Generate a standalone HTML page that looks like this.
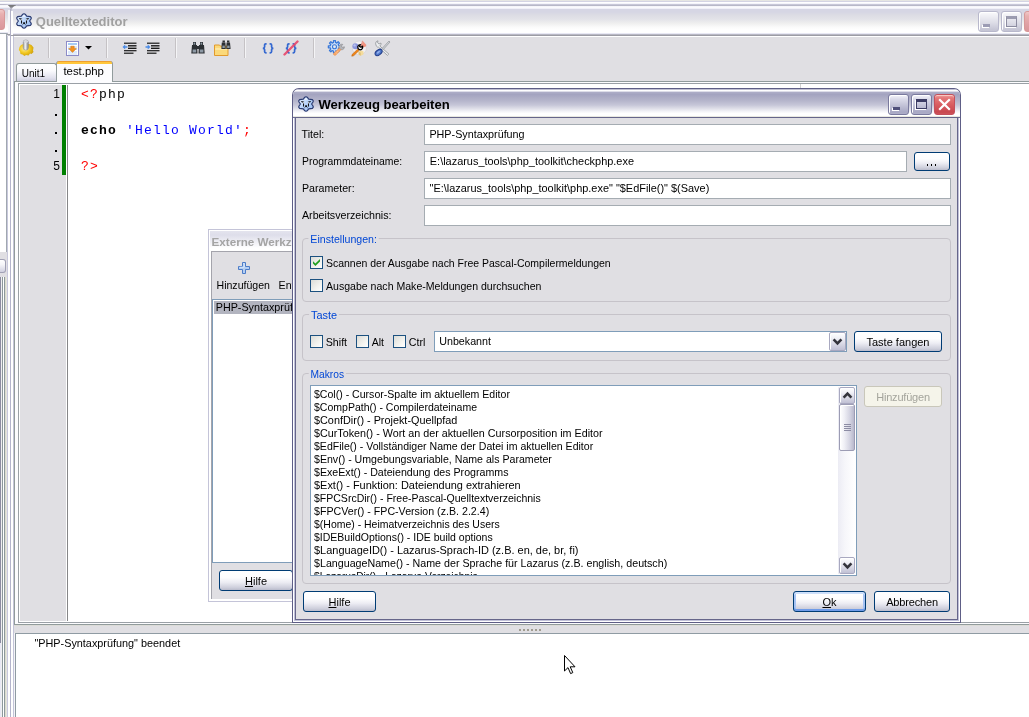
<!DOCTYPE html>
<html>
<head>
<meta charset="utf-8">
<title>Quelltexteditor</title>
<style>
html,body{margin:0;padding:0;}
body{width:1029px;height:717px;overflow:hidden;position:relative;background:#e0dfe3;font-family:"Liberation Sans",sans-serif;font-size:11px;color:#000;}
.a{position:absolute;}
.t{position:absolute;white-space:nowrap;line-height:13px;height:13px;transform-origin:0 0;}
svg{position:absolute;overflow:visible;}
/* silver inactive caption, 31 rows starting at y=5 */
.cap-in{background:linear-gradient(#b8b8c8 0,#b8b8c8 1px,#ececf4 1px,#fff 2px,#f0f0f8 3.5px,#d6d6e4 4.5px,#d6d6e4 7px,#dcdce4 10px,#e2e2e8 14px,#eee 18px,#fafafa 22px,#fff 25px,#fff 27.5px,#e8e8f4 28.5px,#b8b8c4 29.5px,#9c9ca4 30px,#9c9ca4 31px);}
.edit{position:absolute;background:#fff;border:1px solid #a5acb2;box-sizing:border-box;height:21px;}
.edit span{position:absolute;left:4px;top:3px;white-space:nowrap;line-height:13px;transform-origin:0 0;}
.btn{position:absolute;box-sizing:border-box;height:21px;border:1px solid #003c74;border-radius:3px;background:linear-gradient(#fff 0,#fdfdfe 35%,#ececf3 60%,#cdcedb 88%,#b9bbcb 100%);text-align:center;line-height:21px;white-space:nowrap;}
.cb{position:absolute;box-sizing:border-box;width:13px;height:13px;border:1px solid #1c5180;background:linear-gradient(135deg,#dcdcd7 0,#f3f3ef 60%,#fff 100%);}
.grp{position:absolute;box-sizing:border-box;border:1px solid #c6c3c9;border-radius:4px;}
.grp b{transform-origin:0 0;position:absolute;top:-6px;left:6px;background:#e0dfe3;padding:0 2px;color:#0046d5;font-weight:normal;line-height:13px;white-space:nowrap;}
.sep{position:absolute;top:38px;width:1px;height:20px;background:#c5c2c5;box-shadow:1px 0 0 #f4f4f6;}

.capb{width:21px;height:21px;box-sizing:border-box;border:1px solid #7a7a9e;border-radius:3px;background:linear-gradient(#f4f4fa 0,#dcdcea 4px,#c4c4d8 10px,#a8a8c4 17px,#b4b4cc 21px);box-shadow:inset 1px 1px 0 #fff;}
.sbtn{box-sizing:border-box;border:1px solid #a8a8c0;border-radius:2px;background:linear-gradient(#fff 0,#f0f0f6 30%,#d4d4e2 70%,#c0c0d4 100%);box-shadow:inset 1px 1px 0 #fff;}
.btn.dis{border-color:#c9c7ba;background:#f5f4ea;color:#a4a49c;}
.btn.def{box-shadow:inset 0 2px 0 #cee0fb,inset 0 -2px 0 #6f9be8,inset 2px 0 0 #a6c3f3,inset -2px 0 0 #a6c3f3;}
.ln{font-size:12px;}
.code{font-family:"Liberation Mono",monospace;font-size:13px;letter-spacing:1.2px;line-height:16px;height:16px;}


.capi{width:21px;height:21px;box-sizing:border-box;border:1px solid #b8b8cc;border-radius:3px;background:linear-gradient(#fafafc 0,#ececf2 5px,#dcdce6 11px,#c4c4d4 18px,#ccccd8 21px);box-shadow:inset 1px 1px 0 #fff;}

</style>
<style id="fit">
#mwt{transform:translateX(0.80px) scaleX(0.9995);}
#tab1{transform:translateX(-0.30px) scaleX(0.9071);}
#tab2{transform:translateX(0.40px) scaleX(1.0347);}
#msg{transform:translateX(0.40px) scaleX(0.9861);}
#l1{transform:translateX(-0.40px) scaleX(0.9685);}
#l2{transform:translateX(0.00px) scaleX(0.9463);}
#l3{transform:translateX(0.00px) scaleX(0.9665);}
#l4{transform:translateX(0.00px) scaleX(0.9694);}
#e1{transform:translateX(0.40px) scaleX(0.9792);}
#e2{transform:translateX(0.80px) scaleX(0.9938);}
#e3{transform:translateX(0.50px) scaleX(0.9936);}
#c1{transform:translateX(0.00px) scaleX(0.9521);}
#c2{transform:translateX(0.00px) scaleX(0.9597);}
#k1{transform:translateX(-0.30px) scaleX(0.9720);}
#k2{transform:translateX(-0.30px) scaleX(0.9577);}
#k3{transform:translateX(-0.20px) scaleX(0.9702);}
#cbt{transform:translateX(-0.80px) scaleX(0.9733);}
#g1{transform:translateX(-0.60px) scaleX(0.9637);}
#g2{transform:translateX(0.10px) scaleX(0.9925);}
#g3{transform:translateX(-0.30px) scaleX(0.9289);}
#dlt{transform:translateX(0.50px) scaleX(1.0051);}
#ew1{transform:translateX(0.50px) scaleX(0.9613);}
#r1{transform:translateX(0.00px) scaleX(0.9595);}
#r2{transform:translateX(0.00px) scaleX(0.9556);}
#r3{transform:translateX(0.00px) scaleX(0.9856);}
#r4{transform:translateX(0.00px) scaleX(0.9780);}
#r5{transform:translateX(0.00px) scaleX(0.9593);}
#r6{transform:translateX(0.00px) scaleX(0.9632);}
#r7{transform:translateX(0.00px) scaleX(0.9669);}
#r8{transform:translateX(0.00px) scaleX(0.9943);}
#r9{transform:translateX(0.00px) scaleX(0.9558);}
#r10{transform:translateX(0.00px) scaleX(0.9683);}
#r11{transform:translateX(0.00px) scaleX(0.9523);}
#r12{transform:translateX(0.00px) scaleX(0.9551);}
#r13{transform:translateX(0.00px) scaleX(0.9968);}
#r14{transform:translateX(0.00px) scaleX(0.9709);}
#r15{transform:translateX(0.00px) scaleX(0.9321);}
#ewt{transform:translateX(-0.50px) scaleX(1.0602);}
#ew3{transform:translateX(0.70px) scaleX(0.9792);}
#ew2{transform:translateX(0.60px) scaleX(0.9706);}
</style></head>
<body>
<div id="root" style="position:absolute;left:0;top:0;width:1029px;height:717px;will-change:transform;">
<!-- top strip (bottom of window above) -->
<div class="a" style="left:0;top:0;width:1029px;height:5px;background:linear-gradient(#e6e6e2 0,#e6e6e2 1px,#d4d4e4 1px,#d4d4e4 2px,#fff 2px,#fff 3px,#f4f4fa 3px,#f4f4fa 4px,#c8c8d8 4px)"></div>
<!-- left neighbour window -->
<div class="a" style="left:8px;top:5px;width:8px;height:31px;background:linear-gradient(#787878 0,#808084 2px,#b0b0bc 3px,#c0c0cc 100%)"></div>
<div class="a cap-in" style="left:-40px;top:4px;width:51px;height:31px;border-radius:0 7px 0 0;"></div>
<div class="a" style="left:0;top:36px;width:10px;height:681px;background:#e0dfe3;"></div>
<!-- main window -->
<div class="a cap-in" style="left:11px;top:5px;width:1030px;height:31px;border-radius:7px 0 0 0;"></div>
<div class="a" style="left:14px;top:36px;width:1015px;height:681px;background:#e0dfe3;"></div>
<div class="a" style="left:11px;top:36px;width:3px;height:681px;background:linear-gradient(90deg,#fff 0,#fff 2px,#c4c4d8 2px)"></div>
<div class="a" style="left:14px;top:36px;width:1015px;height:1px;background:#fff"></div>
<div class="a" style="left:10px;top:9px;width:1px;height:27px;background:#b0b0c6"></div>
<div class="a" style="left:11px;top:11px;width:2px;height:24px;background:linear-gradient(#fff,#fff)"></div>
<div class="a" style="left:8px;top:10px;width:2px;height:24px;background:#f4f4f8"></div>
<div class="t" style="left:35px;top:14px;font-size:13px;font-weight:bold;color:#a0a0a0;line-height:16px;height:16px;" id="mwt">Quelltexteditor</div>
<!-- main window icon -->
<svg style="left:16px;top:13px" width="16" height="16" viewBox="0 0 16 16">
 <defs><linearGradient id="ig0" x1="0" y1="0" x2="1" y2="1"><stop offset="0" stop-color="#f0f6ff"/><stop offset="0.45" stop-color="#bcd6fa"/><stop offset="1" stop-color="#94b8f0"/></linearGradient></defs>
  <path d="M6.8 1.2 L8 0.7 L9.2 1.2 L10.7 3.1 L14.4 3.7 L15.3 4.8 L15 6 L13.6 8 L15 10 L15.3 11.2 L14.4 12.3 L10.7 12.9 L9.2 14.8 L8 15.3 L6.8 14.8 L5.3 12.9 L1.6 12.3 L0.7 11.2 L1 10 L2.4 8 L1 6 L0.7 4.8 L1.6 3.7 L5.3 3.1 Z" fill="url(#ig0)" stroke="#2c3c72" stroke-width="1.2" stroke-linejoin="round"/>
 <path d="M8 1.8 L9.6 3.8 L6.4 3.8 Z" fill="#f4f8ff" opacity="0.9"/>
 <path d="M3.3 5.5 L6 6.3 M12.7 5.5 L10 6.3" stroke="#0c0c10" stroke-width="1.3" fill="none"/>
 <path d="M5.5 7 L5.6 10.6 M10.5 7 L10.4 10.6" stroke="#0c0c10" stroke-width="1" fill="none"/>
 <rect x="5" y="6.3" width="1.1" height="1.1" fill="#fff"/><rect x="10" y="6.3" width="1.1" height="1.1" fill="#fff"/>
 <rect x="7.2" y="9.3" width="1.7" height="1.8" fill="#000"/>
 <rect x="6.2" y="11.4" width="0.9" height="0.8" fill="#404860"/><rect x="9" y="11.4" width="0.9" height="0.8" fill="#404860"/>
</svg>
<!-- main window caption buttons (inactive) -->
<div class="a capi" style="left:978px;top:11px;"></div>
<div class="a" style="left:983px;top:24px;width:7px;height:3px;background:#9c9cb4;box-shadow:-1px 1px 0 #fff"></div>
<div class="a capi" style="left:1001px;top:11px;"></div>
<div class="a" style="left:1006px;top:16px;width:11px;height:11px;box-sizing:border-box;border:1px solid #8c8ca0;border-top:3px solid #9c9cb0;box-shadow:-1px 1px 0 #fff"></div>
<div class="a" style="left:1024px;top:11px;width:21px;height:21px;box-sizing:border-box;border:1px solid #d89898;border-radius:3px;background:linear-gradient(#f0c8c8 0,#e8b0b0 4px,#e0a0a4 12px,#d89498 21px);"></div>
<!-- left neighbour close button -->
<div class="a" style="left:-16px;top:9px;width:21px;height:21px;box-sizing:border-box;border:1px solid #d89898;border-radius:3px;background:linear-gradient(#f0c8c8 0,#e8b0b0 4px,#e0a0a4 12px,#d89498 21px);"></div>
<!-- left neighbour client strip -->
<div class="a" style="left:0;top:33px;width:7px;height:219px;background:#fff;border-top:1px solid #a0a8b0;border-right:1px solid #a0a8b0;box-sizing:border-box"></div>
<div class="a" style="left:0;top:259px;width:6px;height:14px;box-sizing:border-box;border:1px solid #a0a0b4;border-left:none;border-radius:0 3px 3px 0;background:linear-gradient(#fff 0,#f4f4f8 40%,#d0d0e0 100%)"></div>
<div class="a" style="left:0;top:277px;width:1px;height:366px;background:#8c8ca0"></div><div class="a" style="left:0;top:643px;width:1px;height:74px;background:#e8e8f4"></div>
<div class="a" style="left:0;top:277px;width:7px;height:440px;background:linear-gradient(90deg,transparent 0,transparent 1px,#f0f0f0 1px,#f0f0f0 2px,#8c989c 2px,#8c989c 3px,#fff 3px,#fff 4px,#8c989c 4px,#8c989c 5px,#dcdccc 5px,#dcdccc 6px,#e4e4e0 6px)"></div>
<div class="a" style="left:7px;top:36px;width:4px;height:681px;background:linear-gradient(90deg,#c8c8dc 0,#c8c8dc 1px,#fff 1px,#fff 3px,#b4b4cc 3px)"></div>
<!-- toolbar -->
<div class="sep" style="left:48px"></div>
<div class="sep" style="left:106px"></div>
<div class="sep" style="left:175px"></div>
<div class="sep" style="left:244px"></div>
<div class="sep" style="left:313px"></div>
<!-- icon1 : gear + cylinder -->
<svg style="left:18px;top:39px" width="17" height="18" viewBox="0 0 17 18">
 <defs><radialGradient id="gy" cx="0.4" cy="0.4" r="0.7"><stop offset="0" stop-color="#fff0a0"/><stop offset="0.5" stop-color="#f2c820"/><stop offset="1" stop-color="#c89808"/></radialGradient>
 <linearGradient id="gc" x1="0" x2="1"><stop offset="0" stop-color="#9a9a9a"/><stop offset="0.4" stop-color="#f4f4f4"/><stop offset="1" stop-color="#7c7c80"/></linearGradient></defs>
 <path d="M1.5 8 L3 6 L5.5 5 L11 5 L13.5 6 L15.5 8.5 L15 11.5 L15.5 13 L13.5 15 L12 14.5 L10.5 16.5 L8 16 L6.5 17 L4.5 15.5 L2.5 15 L2 12.5 L0.8 11 Z" fill="url(#gy)"/>
 <rect x="5.2" y="1" width="5.2" height="10" rx="2.2" fill="url(#gc)" stroke="#8a8a90" stroke-width="0.5"/>
 <ellipse cx="7.8" cy="2.6" rx="2.4" ry="1.4" fill="#d8d8dc"/>
</svg>
<!-- icon2 : page w/ arrow -->
<svg style="left:66px;top:41px" width="13" height="15" viewBox="0 0 13 15">
 <rect x="0.5" y="0.5" width="12" height="14" fill="#fff" stroke="#8c8cc8"/>
 <rect x="2" y="2" width="9" height="2" fill="#a8ccf4"/><rect x="2" y="5.5" width="9" height="1" fill="#b8d4f6"/><rect x="2" y="8" width="9" height="1" fill="#b8d4f6"/><rect x="2" y="10.5" width="9" height="1" fill="#b8d4f6"/><rect x="2" y="12.5" width="9" height="1" fill="#c8dcf8"/>
 <path d="M4.8 5.2 L8.2 5.2 L8.2 7.4 L10.4 7.4 L6.5 11.4 L2.6 7.4 L4.8 7.4 Z" fill="#f4921e" stroke="#c8700c" stroke-width="0.5"/>
</svg>
<svg style="left:85px;top:46px" width="7" height="4" viewBox="0 0 7 4"><path d="M0 0 L7 0 L3.5 3.6 Z" fill="#000"/></svg>
<!-- unindent / indent -->
<svg style="left:122px;top:42px" width="15" height="12" viewBox="0 0 15 12">
 <g fill="#1a1a1a"><rect x="2" y="0.6" width="12.5" height="1.2"/><rect x="6" y="3.1" width="8.5" height="1.4"/><rect x="6" y="5.6" width="8.5" height="1.4"/><rect x="2" y="8.1" width="12.5" height="1.2"/><rect x="2" y="10.6" width="9.5" height="1.2"/></g>
 <path d="M0.5 5 L3.2 2.6 L3.2 4.2 L5.4 4.2 L5.4 5.8 L3.2 5.8 L3.2 7.4 Z" fill="#4a8ce8"/>
</svg>
<svg style="left:145px;top:42px" width="15" height="12" viewBox="0 0 15 12">
 <g fill="#1a1a1a"><rect x="2" y="0.6" width="12.5" height="1.2"/><rect x="6" y="3.1" width="8.5" height="1.4"/><rect x="6" y="5.6" width="8.5" height="1.4"/><rect x="2" y="8.1" width="12.5" height="1.2"/><rect x="2" y="10.6" width="9.5" height="1.2"/></g>
 <path d="M5.4 5 L2.7 2.6 L2.7 4.2 L0.5 4.2 L0.5 5.8 L2.7 5.8 L2.7 7.4 Z" fill="#4a8ce8"/>
</svg>
<!-- binoculars -->
<svg style="left:191px;top:41px" width="14" height="13" viewBox="0 0 14 13">
 <g fill="#2c3034"><rect x="2" y="1" width="3" height="3"/><rect x="9" y="1" width="3" height="3"/><path d="M1 4 L6 4 L6.5 12.5 L0.3 12.5 Z"/><path d="M8 4 L13 4 L13.7 12.5 L7.5 12.5 Z"/><rect x="5.5" y="5" width="3" height="3"/></g>
 <g fill="#8c98a4"><rect x="2.6" y="1.6" width="1.6" height="2"/><rect x="9.6" y="1.6" width="1.6" height="2"/><rect x="1.6" y="8.5" width="3.6" height="3"/><rect x="8.8" y="8.5" width="3.6" height="3"/></g>
</svg>
<!-- folder + binoculars -->
<svg style="left:214px;top:40px" width="17" height="16" viewBox="0 0 17 16">
 <path d="M0.5 5 L5.5 5 L6.5 6.2 L14 6.2 L14 15.5 L0.5 15.5 Z" fill="#fbd97a" stroke="#e29a2c"/>
 <rect x="1.2" y="8.5" width="12.2" height="1" fill="#fff3c4"/>
 <g fill="#2c3034"><rect x="8.5" y="0.5" width="2.4" height="2"/><rect x="13" y="0.5" width="2.4" height="2"/><path d="M7.8 2.5 L11.4 2.5 L11.8 9 L7.4 9 Z"/><path d="M12.6 2.5 L16 2.5 L16.6 9 L12.2 9 Z"/></g>
 <g fill="#8c98a4"><rect x="8.4" y="5.6" width="2.4" height="2.4"/><rect x="13.2" y="5.6" width="2.4" height="2.4"/></g>
 <path d="M6.5 9 L14 9 L14 15.5 L0.5 15.5 L0.5 9" fill="#fbd97a" opacity="0"/>
</svg>
<!-- {} -->
<svg style="left:262px;top:43px" width="13" height="11" viewBox="0 0 13 11"><g fill="none" stroke="#3468d0" stroke-width="1.7"><path d="M4.6 0.8 H3.8 Q2.6 0.8 2.6 2 V4 Q2.6 5.3 0.8 5.3 Q2.6 5.3 2.6 6.6 V8.6 Q2.6 9.8 3.8 9.8 H4.6"/><path d="M7.6 0.8 H8.4 Q9.6 0.8 9.6 2 V4 Q9.6 5.3 11.4 5.3 Q9.6 5.3 9.6 6.6 V8.6 Q9.6 9.8 8.4 9.8 H7.6"/></g></svg>
<svg style="left:285px;top:43px" width="13" height="11" viewBox="0 0 13 11"><g fill="none" stroke="#3468d0" stroke-width="1.7"><path d="M4.6 0.8 H3.8 Q2.6 0.8 2.6 2 V4 Q2.6 5.3 0.8 5.3 Q2.6 5.3 2.6 6.6 V8.6 Q2.6 9.8 3.8 9.8 H4.6"/><path d="M7.6 0.8 H8.4 Q9.6 0.8 9.6 2 V4 Q9.6 5.3 11.4 5.3 Q9.6 5.3 9.6 6.6 V8.6 Q9.6 9.8 8.4 9.8 H7.6"/></g></svg>
<svg style="left:283px;top:40px" width="16" height="16" viewBox="0 0 16 16"><path d="M14.5 1.5 L1.5 14.5" stroke="#e8486c" stroke-width="2.4" stroke-linecap="round" opacity="0.9"/></svg>
<!-- gear -->
<svg style="left:328px;top:40px" width="18" height="17" viewBox="0 0 18 17">
 <path d="M10.78 5.77 L12.62 5.83 L12.62 7.77 L10.78 7.83 L10.25 9.10 L11.52 10.44 L10.14 11.82 L8.80 10.55 L7.53 11.08 L7.47 12.92 L5.53 12.92 L5.47 11.08 L4.20 10.55 L2.86 11.82 L1.48 10.44 L2.75 9.10 L2.22 7.83 L0.38 7.77 L0.38 5.83 L2.22 5.77 L2.75 4.50 L1.48 3.16 L2.86 1.78 L4.20 3.05 L5.47 2.52 L5.53 0.68 L7.47 0.68 L7.53 2.52 L8.80 3.05 L10.14 1.78 L11.52 3.16 L10.25 4.50 Z" fill="#cfe0f6" stroke="#3a78d8" stroke-width="1.3" stroke-linejoin="round"/>
 <circle cx="6.5" cy="6.8" r="2" fill="#e4e8f0" stroke="#3a78d8" stroke-width="1.1"/>
 <path d="M12 5 Q13 3.8 14.8 4.4 L13.4 6 L14.4 7.4 L16.4 6.8 Q16.6 8.8 14.6 9.6 Q13.2 10 12.4 9.2 L11 8 Q10.6 6.4 12 5 Z" fill="#b4b4b8" stroke="#8c8c90" stroke-width="0.7"/>
 <path d="M11.2 8.2 L12.8 9.8 L7.6 15.2 Q6.4 15.6 5.6 14.6 Q5.2 13.8 5.8 13.2 Z" fill="#f8a868" stroke="#ec8c44" stroke-width="0.6"/>
 <path d="M7.4 12 L8.8 13.4 M8.8 10.6 L10.2 12" stroke="#fcd0a8" stroke-width="0.7"/>
</svg>
<!-- paint -->
<svg style="left:351px;top:40px" width="17" height="17" viewBox="0 0 17 17">
 <circle cx="8.4" cy="8" r="7" fill="#f2f0f2" stroke="#d0ccd0" stroke-width="0.6"/>
 <path d="M11.4 0.4 L15.4 5 L14.6 6.8 L11 7.6 Z" fill="#f29480"/><path d="M11.4 0.4 L11 7.6 L9.6 5.6 Z" fill="#d47c70"/>
 <circle cx="4.4" cy="6.2" r="3" fill="#8c96dc"/><circle cx="3.6" cy="5.4" r="1.2" fill="#b8c0f0"/>
 <path d="M7.6 11.6 L10.4 10.4 L12.6 11.6 L12.4 14.6 L9.8 15.8 L7.6 14.4 Z" fill="#f4dc9c"/><path d="M7.6 11.6 L9.8 12.8 L9.8 15.8 L7.6 14.4 Z" fill="#e0c078"/>
 <path d="M6.8 6.6 Q7.2 4.6 9.2 4.6 L8.6 6.4 L10 7.2 L11.6 6.2 Q12.2 8.2 10.6 9.4 Q9.2 10.2 7.8 9.4 Q6.6 8.4 6.8 6.6 Z" fill="#fff" stroke="#000" stroke-width="1.3"/>
 <path d="M6.6 9.2 L8 10.6 L2.8 15.6 L0.8 16.2 L1.2 14.4 Z" fill="#f48414" stroke="#b85c00" stroke-width="0.6"/>
</svg>
<!-- tools -->
<svg style="left:374px;top:40px" width="17" height="17" viewBox="0 0 17 17">
 <path d="M1.6 3.2 Q1.8 1.2 4 0.8 L3.6 2.8 L5 4 L7 3 Q7.4 5 5.8 6 L14.8 14 L13.4 15.4 L4.6 7.2 Q2 7.4 1.6 3.2 Z" fill="#eceef0" stroke="#909498" stroke-width="0.8"/>
 <path d="M15 1 L16 2 L9.2 9.6 L8 8.6 Z" fill="#d0d4d8" stroke="#909498" stroke-width="0.7"/>
 <ellipse cx="4.6" cy="12.4" rx="4" ry="2.4" transform="rotate(-38 4.6 12.4)" fill="#5078c8" stroke="#203c8c" stroke-width="1"/>
 <ellipse cx="4.4" cy="12.2" rx="2" ry="0.9" transform="rotate(-38 4.4 12.2)" fill="#90acec"/>
</svg>
<!-- tabs -->
<div class="a" style="left:14px;top:81px;width:1015px;height:544px;background:#fcfcfe;border:1px solid #919b9c;border-right:none;box-sizing:border-box"></div>
<div class="a" style="left:16px;top:63px;width:41px;height:18px;box-sizing:border-box;border:1px solid #919b9c;border-bottom:none;border-radius:3px 3px 0 0;background:linear-gradient(#fff 0,#fafafd 40%,#e2e2ee 80%,#cfcfe0 100%)"></div>
<div class="t" style="left:22px;top:67px;" id="tab1">Unit1</div>
<div class="a" style="left:56px;top:61px;width:57px;height:21px;box-sizing:border-box;border:1px solid #919b9c;border-bottom:none;border-top:none;border-radius:3px 3px 0 0;background:linear-gradient(#e68b2c 0,#ffc73c 1.5px,#ffc73c 3px,#fcfcfe 3px)"></div>
<div class="t" style="left:63px;top:65px;" id="tab2">test.php</div>
<!-- editor -->
<div class="a" style="left:18px;top:83px;width:1011px;height:540px;background:#fff;border:1px solid #9aa0a6;border-right:none;box-sizing:border-box"></div>
<div class="a" style="left:20px;top:85px;width:42px;height:536px;background:#e0dfe3"></div>
<div class="a" style="left:62px;top:85px;width:4px;height:90px;background:#008000"></div>
<div class="a" style="left:62px;top:175px;width:4px;height:446px;background:#e0dfe3"></div>
<div class="a" style="left:67px;top:85px;width:1px;height:536px;background:#868688"></div>
<div class="a" style="left:800px;top:84px;width:1px;height:537px;background:#d0d0d0"></div>
<div class="t ln" style="left:40px;top:88px;width:20px;text-align:right;">1</div>
<div class="t ln" style="left:40px;top:160px;width:20px;text-align:right;">5</div>
<div class="a" style="left:55px;top:114px;width:2px;height:2px;background:#000"></div>
<div class="a" style="left:55px;top:132px;width:2px;height:2px;background:#000"></div>
<div class="a" style="left:55px;top:150px;width:2px;height:2px;background:#000"></div>
<div class="t code" style="left:81px;top:87px;"><span style="color:#f00">&lt;?</span>php</div>
<div class="t code" style="left:81px;top:123px;"><b>echo</b> <span style="color:#00f">'Hello World'</span><span style="color:#f00">;</span></div>
<div class="t code" style="left:81px;top:159px;color:#f00">?&gt;</div>
<!-- splitter + messages -->
<div class="a" style="left:14px;top:625px;width:1015px;height:8px;background:linear-gradient(#d8d8cc 0,#e0dfe3 1px)"></div>
<div class="a" style="left:519px;top:629px;width:22px;height:2px;background:repeating-linear-gradient(90deg,#a09c90 0,#a09c90 2px,transparent 2px,transparent 4px)"></div>
<div class="a" style="left:14px;top:633px;width:1px;height:84px;background:#f4f4f8"></div>
<div class="a" style="left:15px;top:633px;width:1014px;height:84px;background:#fff;border:1px solid #8f9ba3;border-right:none;border-bottom:none;box-sizing:border-box"></div>
<div class="t" style="left:34px;top:637px;" id="msg">"PHP-Syntaxprüfung" beendet</div>
<!-- Externe Werkzeuge window (behind) -->
<div class="a" style="left:208px;top:229px;width:90px;height:373px;background:#e0dfe3;border:1px solid #c4c4d8;box-sizing:border-box;box-shadow:inset 2px 2px 0 #fff,inset -2px -2px 0 #fff"></div>
<div class="a" style="left:210px;top:231px;width:88px;height:20px;background:linear-gradient(#e4e4ee 0,#dedeea 4px,#e8e8f0 8px,#f4f4f8 13px,#fff 17px,#fff 20px)"></div>
<div class="a" style="left:211px;top:251px;width:87px;height:348px;background:#e0dfe3;border-left:1px solid #a4a4ac;border-top:1px solid #a4a4ac;box-sizing:border-box"></div>
<div class="t" style="left:212px;top:236px;font-weight:bold;color:#a4a4a4;" id="ewt">Externe Werkzeuge</div>
<svg style="left:238px;top:262px" width="12" height="12" viewBox="0 0 12 12"><path d="M4.5 0.5 H7.5 V4.5 H11.5 V7.5 H7.5 V11.5 H4.5 V7.5 H0.5 V4.5 H4.5 Z" fill="#b4cef2" stroke="#4c7cc8" stroke-width="1"/><path d="M5.2 1.6 H6.2 V5.2 H1.6" fill="none" stroke="#e4f0ff" stroke-width="0.8"/></svg>
<div class="t" style="left:216px;top:279px;" id="ew1">Hinzufügen</div>
<div class="t" style="left:278px;top:279px;" id="ew2">Entfernen</div>
<div class="a" style="left:212px;top:299px;width:90px;height:264px;background:#fff;border:1px solid #7f9db9;box-sizing:border-box"></div>
<div class="a" style="left:214px;top:301px;width:86px;height:13px;background:#b2b4bf"></div>
<div class="t" style="left:215px;top:301px;" id="ew3">PHP-Syntaxprüfung</div>
<div class="btn" style="left:219px;top:570px;width:74px;" id="ewh"><u>H</u>ilfe</div>
<!-- Werkzeug bearbeiten dialog -->
<div class="a" id="dlg" style="left:292px;top:88px;width:669px;height:535px;">
 <div class="a" style="left:0;top:0;width:669px;height:535px;border-radius:7px 7px 0 0;background:#5e5e86;"></div>
 <div class="a" style="left:1px;top:1px;width:667px;height:533px;border-radius:6px 6px 0 0;background:#fff;"></div>
 <div class="a" style="left:2px;top:2px;width:665px;height:531px;border-radius:5px 5px 0 0;background:#c0c0d8;"></div>
 <div class="a" style="left:1px;top:1px;width:667px;height:29px;border-radius:6px 6px 0 0;background:linear-gradient(#c0c0d2 0,#c0c0d2 0.9px,#fff 1.1px,#fdfdfe 2px,#d0d0e0 2.7px,#acacc6 3.5px,#a4a4c0 5.5px,#aeaec6 9px,#b6b6cc 12px,#c6c6d8 16px,#dedee8 19.5px,#f4f4f8 22.5px,#fff 24.5px,#fff 26.6px,#e8e8e0 27.4px,#e8e8e0 27.8px,#6c6c94 28.2px,#6c6c94 29px);"></div>
 <div class="a" style="left:3px;top:29px;width:663px;height:503px;background:#66668a;"></div>
 <div class="a" style="left:4px;top:30px;width:661px;height:501px;background:#e0dfe3;"></div>
</div>
<!-- dialog icon -->
<svg style="left:298px;top:96px" width="16" height="16" viewBox="0 0 16 16">
 <defs><linearGradient id="ig1" x1="0" y1="0" x2="1" y2="1"><stop offset="0" stop-color="#f0f6ff"/><stop offset="0.45" stop-color="#bcd6fa"/><stop offset="1" stop-color="#94b8f0"/></linearGradient></defs>
  <path d="M6.8 1.2 L8 0.7 L9.2 1.2 L10.7 3.1 L14.4 3.7 L15.3 4.8 L15 6 L13.6 8 L15 10 L15.3 11.2 L14.4 12.3 L10.7 12.9 L9.2 14.8 L8 15.3 L6.8 14.8 L5.3 12.9 L1.6 12.3 L0.7 11.2 L1 10 L2.4 8 L1 6 L0.7 4.8 L1.6 3.7 L5.3 3.1 Z" fill="url(#ig1)" stroke="#2c3c72" stroke-width="1.2" stroke-linejoin="round"/>
 <path d="M8 1.8 L9.6 3.8 L6.4 3.8 Z" fill="#f4f8ff" opacity="0.9"/>
 <path d="M3.3 5.5 L6 6.3 M12.7 5.5 L10 6.3" stroke="#0c0c10" stroke-width="1.3" fill="none"/>
 <path d="M5.5 7 L5.6 10.6 M10.5 7 L10.4 10.6" stroke="#0c0c10" stroke-width="1" fill="none"/>
 <rect x="5" y="6.3" width="1.1" height="1.1" fill="#fff"/><rect x="10" y="6.3" width="1.1" height="1.1" fill="#fff"/>
 <rect x="7.2" y="9.3" width="1.7" height="1.8" fill="#000"/>
 <rect x="6.2" y="11.4" width="0.9" height="0.8" fill="#404860"/><rect x="9" y="11.4" width="0.9" height="0.8" fill="#404860"/>
</svg>
<div class="t" style="left:318px;top:97px;font-size:13px;font-weight:bold;line-height:16px;height:16px;" id="dlt">Werkzeug bearbeiten</div>
<!-- caption buttons -->
<div class="a capb" style="left:888px;top:94px;"></div>
<div class="a" style="left:893px;top:107px;width:7px;height:3px;background:#50507a;box-shadow:-1px 1px 0 #fff"></div>
<div class="a capb" style="left:911px;top:94px;"></div>
<div class="a" style="left:916px;top:99px;width:11px;height:10px;box-sizing:border-box;border:1px solid #3c3c64;border-top:3px solid #3c3c64;box-shadow:-1px 1px 0 #fff"></div>
<div class="a" style="left:934px;top:94px;width:21px;height:21px;box-sizing:border-box;border:1px solid #c4505c;border-radius:3px;background:linear-gradient(#f0a0a0 0,#e47878 3px,#d85c60 10px,#c84850 17px,#d46064 21px);box-shadow:inset 0 1px 0 #f8c8c0"></div>
<svg style="left:934px;top:94px" width="21" height="21" viewBox="0 0 21 21"><path d="M5.2 5.2 L15.8 15.8 M15.8 5.2 L5.2 15.8" stroke="#fff" stroke-width="2.2" stroke-linecap="butt"/></svg>
<!-- dialog content -->
<div class="t" style="left:302px;top:128px;" id="l1">Titel:</div>
<div class="t" style="left:302px;top:155px;" id="l2">Programmdateiname:</div>
<div class="t" style="left:302px;top:182px;" id="l3">Parameter:</div>
<div class="t" style="left:302px;top:209px;" id="l4">Arbeitsverzeichnis:</div>
<div class="edit" style="left:424px;top:124px;width:527px;"><span id="e1">PHP-Syntaxprüfung</span></div>
<div class="edit" style="left:424px;top:151px;width:483px;"><span id="e2">E:\lazarus_tools\php_toolkit\checkphp.exe</span></div>
<div class="edit" style="left:424px;top:178px;width:527px;"><span id="e3">"E:\lazarus_tools\php_toolkit\php.exe" "$EdFile()" $(Save)</span></div>
<div class="edit" style="left:424px;top:205px;width:527px;"></div>
<div class="btn" style="left:914px;top:152px;width:36px;height:19px;" id="bdots"></div><div class="a" style="left:927px;top:164px;width:1px;height:2px;background:#000;box-shadow:4px 0 0 #000,8px 0 0 #000"></div>
<!-- Einstellungen -->
<div class="grp" style="left:302px;top:238px;width:649px;height:64px;"><b id="g1">Einstellungen:</b></div>
<div class="cb" style="left:310px;top:256px;"></div>
<svg style="left:310px;top:256px" width="13" height="13" viewBox="0 0 13 13"><path d="M3 5.2 L3 7.6 L5.4 10 L10 5.4 L10 3 L5.4 7.6 Z" fill="#21a121"/></svg>
<div class="t" style="left:326px;top:257px;" id="c1">Scannen der Ausgabe nach Free Pascal-Compilermeldungen</div>
<div class="cb" style="left:310px;top:279px;"></div>
<div class="t" style="left:326px;top:280px;" id="c2">Ausgabe nach Make-Meldungen durchsuchen</div>
<!-- Taste -->
<div class="grp" style="left:302px;top:314px;width:649px;height:47px;"><b id="g2">Taste</b></div>
<div class="cb" style="left:310px;top:335px;"></div>
<div class="t" style="left:326px;top:336px;" id="k1">Shift</div>
<div class="cb" style="left:356px;top:335px;"></div>
<div class="t" style="left:372px;top:336px;" id="k2">Alt</div>
<div class="cb" style="left:393px;top:335px;"></div>
<div class="t" style="left:409px;top:336px;" id="k3">Ctrl</div>
<div class="edit" style="left:434px;top:331px;width:413px;border-color:#7f9db9;"><span id="cbt" style="left:5px">Unbekannt</span></div>
<div class="a sbtn" style="left:829px;top:332px;width:17px;height:19px;"></div>
<svg style="left:829px;top:332px" width="17" height="19" viewBox="0 0 17 19"><path d="M4.6 7.4 L8.5 11.3 L12.4 7.4" fill="none" stroke="#34343c" stroke-width="2.6"/></svg>
<div class="btn" style="left:854px;top:331px;width:88px;" id="btf">Taste fangen</div>
<!-- Makros -->
<div class="grp" style="left:302px;top:373px;width:649px;height:211px;"><b id="g3">Makros</b></div>
<div class="a" style="left:310px;top:385px;width:547px;height:191px;background:#fff;border:1px solid #7f9db9;box-sizing:border-box;overflow:hidden" id="lb">
<div class="t" id="r1" style="left:3px;top:2px">$Col() - Cursor-Spalte im aktuellem Editor</div>
<div class="t" id="r2" style="left:3px;top:15px">$CompPath() - Compilerdateiname</div>
<div class="t" id="r3" style="left:3px;top:28px">$ConfDir() - Projekt-Quellpfad</div>
<div class="t" id="r4" style="left:3px;top:41px">$CurToken() - Wort an der aktuellen Cursorposition im Editor</div>
<div class="t" id="r5" style="left:3px;top:54px">$EdFile() - Vollständiger Name der Datei im aktuellen Editor</div>
<div class="t" id="r6" style="left:3px;top:67px">$Env() - Umgebungsvariable, Name als Parameter</div>
<div class="t" id="r7" style="left:3px;top:80px">$ExeExt() - Dateiendung des Programms</div>
<div class="t" id="r8" style="left:3px;top:93px">$Ext() - Funktion: Dateiendung extrahieren</div>
<div class="t" id="r9" style="left:3px;top:106px">$FPCSrcDir() - Free-Pascal-Quelltextverzeichnis</div>
<div class="t" id="r10" style="left:3px;top:119px">$FPCVer() - FPC-Version (z.B. 2.2.4)</div>
<div class="t" id="r11" style="left:3px;top:132px">$(Home) - Heimatverzeichnis des Users</div>
<div class="t" id="r12" style="left:3px;top:145px">$IDEBuildOptions() - IDE build options</div>
<div class="t" id="r13" style="left:3px;top:158px">$LanguageID() - Lazarus-Sprach-ID (z.B. en, de, br, fi)</div>
<div class="t" id="r14" style="left:3px;top:171px">$LanguageName() - Name der Sprache für Lazarus (z.B. english, deutsch)</div>
<div class="t" id="r15" style="left:3px;top:184px">$LazarusDir() - Lazarus-Verzeichnis</div>

<div class="a" style="left:527px;top:1px;width:17px;height:187px;background:linear-gradient(90deg,#ececf4 0,#f6f6fa 40%,#fff 100%)"></div>
<div class="a sbtn" style="left:528px;top:1px;width:16px;height:17px;"></div>
<svg style="left:527.5px;top:1px" width="17" height="17" viewBox="0 0 17 17"><path d="M4.6 10.6 L8.5 6.7 L12.4 10.6" fill="none" stroke="#34343c" stroke-width="2.6"/></svg>
<div class="a" style="left:528px;top:18px;width:16px;height:47px;box-sizing:border-box;border:1px solid #9c9cb4;border-radius:2px;background:linear-gradient(90deg,#fff 0,#f0f0f6 30%,#d4d4e2 70%,#b8b8cc 100%);box-shadow:inset 1px 1px 0 #fff"></div>
<div class="a" style="left:533px;top:38px;width:7px;height:7px;background:repeating-linear-gradient(#8c8ca4 0,#8c8ca4 1px,transparent 1px,transparent 2px)"></div>
<div class="a sbtn" style="left:528px;top:171px;width:16px;height:17px;"></div>
<svg style="left:527.5px;top:171px" width="17" height="17" viewBox="0 0 17 17"><path d="M4.6 6.4 L8.5 10.3 L12.4 6.4" fill="none" stroke="#34343c" stroke-width="2.6"/></svg>
</div>
<div class="btn dis" style="left:864px;top:386px;width:78px;letter-spacing:-0.2px" id="bhz">Hinzufügen</div>
<!-- bottom buttons -->
<div class="btn" style="left:303px;top:591px;width:73px;" id="bh"><u>H</u>ilfe</div>
<div class="btn def" style="left:793px;top:591px;width:73px;" id="bok"><u>O</u>k</div>
<div class="btn" style="left:874px;top:591px;width:76px;letter-spacing:-0.17px" id="bab">Abbrechen</div>
<!-- mouse cursor -->
<svg style="left:564px;top:655px" width="12" height="20" viewBox="0 0 12 20"><path d="M0.5 0.5 L0.5 16 L4 12.6 L6.6 18.6 L8.8 17.6 L6.2 11.8 L11 11.8 Z" fill="#fff" stroke="#000" stroke-width="1"/></svg>
</div>
</body>
</html>
